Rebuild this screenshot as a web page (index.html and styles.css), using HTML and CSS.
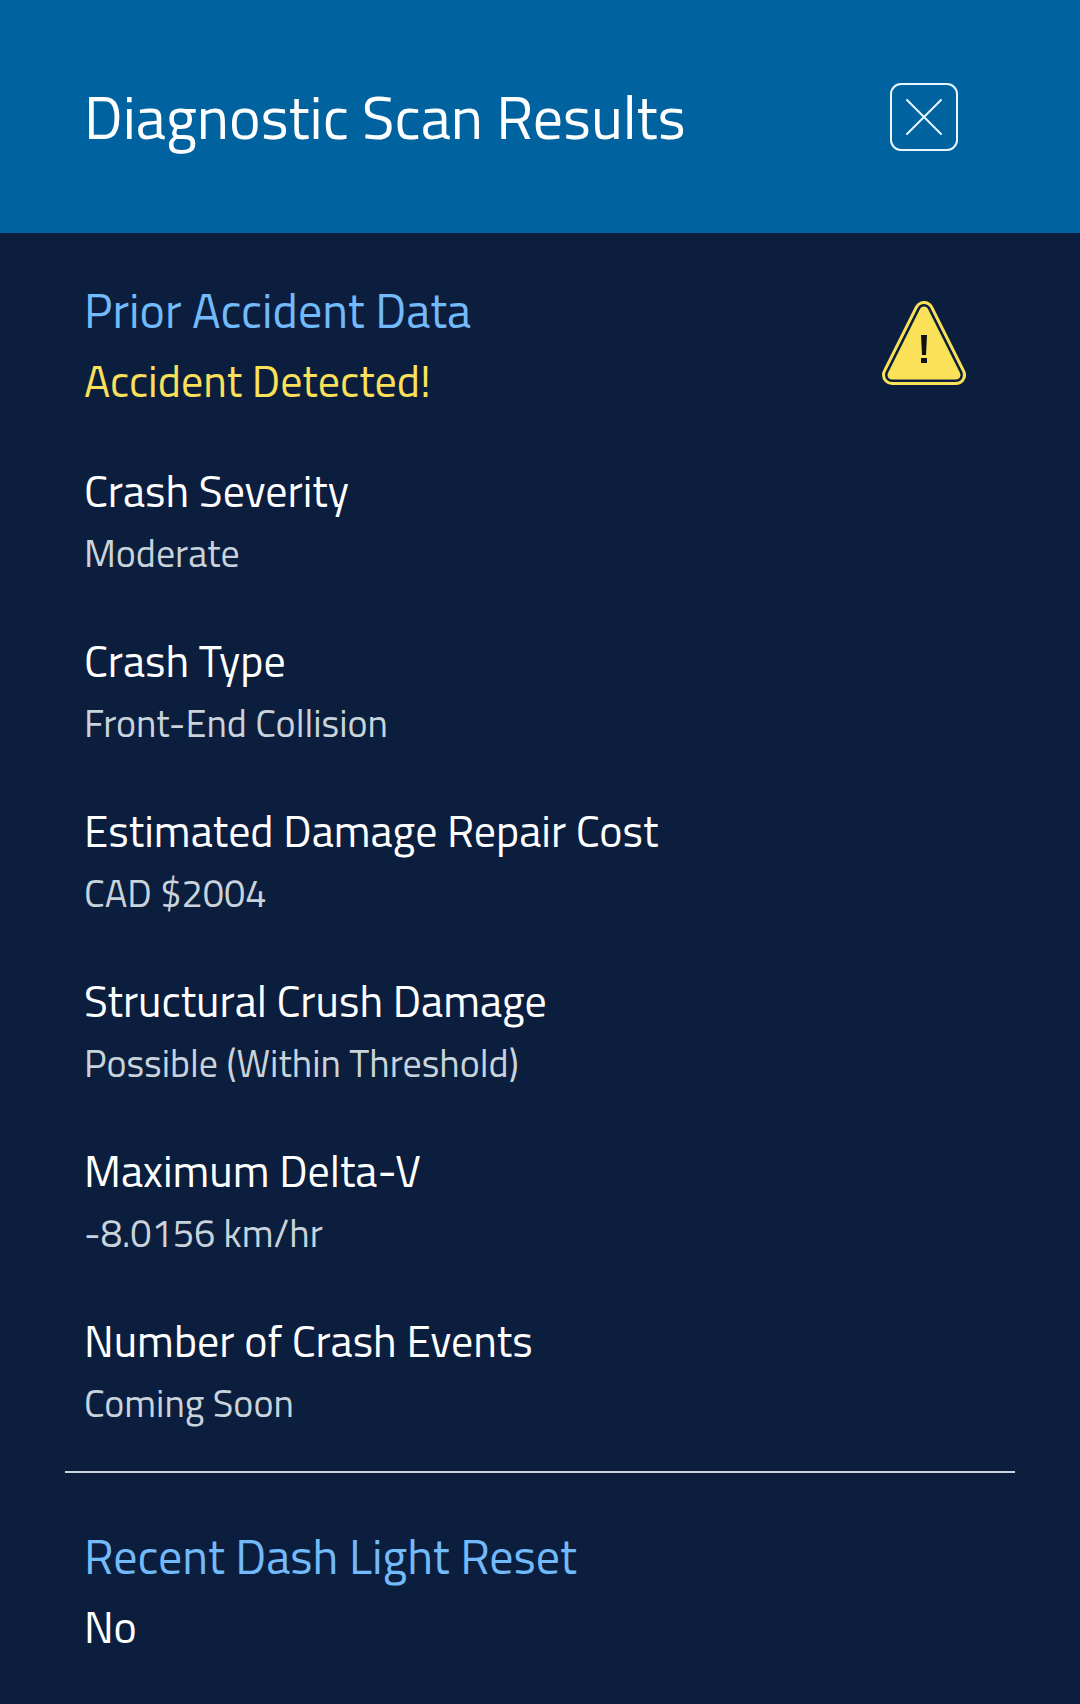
FILE: index.html
```html
<!DOCTYPE html>
<html lang="en">

<head>
    <meta charset="UTF-8">
    <meta name="viewport" content="width=device-width, initial-scale=1.0">
    <title>Diagnostic Scan Results</title>
    <link rel="stylesheet" href="styles.css">
</head>

<body>
    <header class="scan-header">
        <h1>Diagnostic Scan Results</h1>
        <button type="button" class="close-button" aria-label="Close">
            <svg viewBox="0 0 68 68" fill="none" stroke="#e9f8ff" stroke-width="2" stroke-linecap="round">
                <rect x="1" y="1" width="66" height="66" rx="10" />
                <path d="M17 17L51 51M51 17L17 51" />
            </svg>
        </button>
    </header>
    <main class="scan-results">
        <section class="result-section">
            <div class="section-top">
                <div>
                    <h2>Prior Accident Data</h2>
                    <p class="status status-warning">Accident Detected!</p>
                </div>
                <svg class="warning-icon" viewBox="0 0 84 84" aria-hidden="true">
                    <path d="M42 10L74 74H10Z" fill="#fbe158" stroke="#fbe158" stroke-width="20" stroke-linejoin="round" />
                    <path d="M42 10L74 74H10Z" fill="#fbe158" stroke="#0c1e3e" stroke-width="14" stroke-linejoin="round" />
                    <path d="M42 10L74 74H10Z" fill="#fbe158" stroke="#fbe158" stroke-width="9" stroke-linejoin="round" />
                    <path d="M39 34H45L44 54H40Z" fill="#111" />
                    <rect x="39" y="57" width="6" height="5" fill="#111" />
                </svg>
            </div>
            <dl class="details">
                <div>
                    <dt>Crash Severity</dt>
                    <dd>Moderate</dd>
                </div>
                <div>
                    <dt>Crash Type</dt>
                    <dd>Front-End Collision</dd>
                </div>
                <div>
                    <dt>Estimated Damage Repair Cost</dt>
                    <dd>CAD $2004</dd>
                </div>
                <div>
                    <dt>Structural Crush Damage</dt>
                    <dd>Possible (Within Threshold)</dd>
                </div>
                <div>
                    <dt>Maximum Delta-V</dt>
                    <dd>-8.0156 km/hr</dd>
                </div>
                <div>
                    <dt>Number of Crash Events</dt>
                    <dd>Coming Soon</dd>
                </div>
            </dl>
        </section>
        <section class="result-section">
            <h2>Recent Dash Light Reset</h2>
            <p class="status">No</p>
        </section>
    </main>
</body>

</html>
```

FILE: styles.css
```css
* {
    box-sizing: border-box;
    margin: 0;
    padding: 0;
}

body {
    font-family: "Titillium Web", "Noto Sans", sans-serif;
    background: #0c1e3e;
    color: #fff;
    min-height: 100vh;
}

.scan-header {
    display: flex;
    justify-content: space-between;
    align-items: center;
    background: #0162a0;
    padding: 81px 122px 80px 84px;
}

h1,
h2,
dt {
    font-weight: 400;
}

h1 {
    font-size: 60px;
    line-height: 72px;
}

.close-button {
    width: 68px;
    height: 68px;
    background: none;
    border: none;
    cursor: pointer;
}

.close-button svg {
    display: block;
}

.scan-results {
    padding: 0 65px;
}

.result-section {
    padding: 46px 19px 38px;
}

.result-section + .result-section {
    border-top: 2px solid #c9d3dc;
    padding-top: 52px;
}

.section-top {
    display: flex;
    justify-content: space-between;
    align-items: flex-start;
    padding-right: 30px;
}

h2 {
    font-size: 48px;
    line-height: 64px;
    color: #72bafa;
    margin-bottom: 6px;
}

.status {
    font-size: 44px;
    line-height: 64px;
}

.status-warning {
    color: #fbe158;
}

.warning-icon {
    width: 84px;
    height: 84px;
    margin-top: 22px;
}

.details {
    display: flex;
    flex-direction: column;
    gap: 46px;
    margin-top: 46px;
}

dt {
    font-size: 44px;
    line-height: 64px;
}

dd {
    font-size: 38px;
    line-height: 60px;
    color: #c9d3dc;
}
```
